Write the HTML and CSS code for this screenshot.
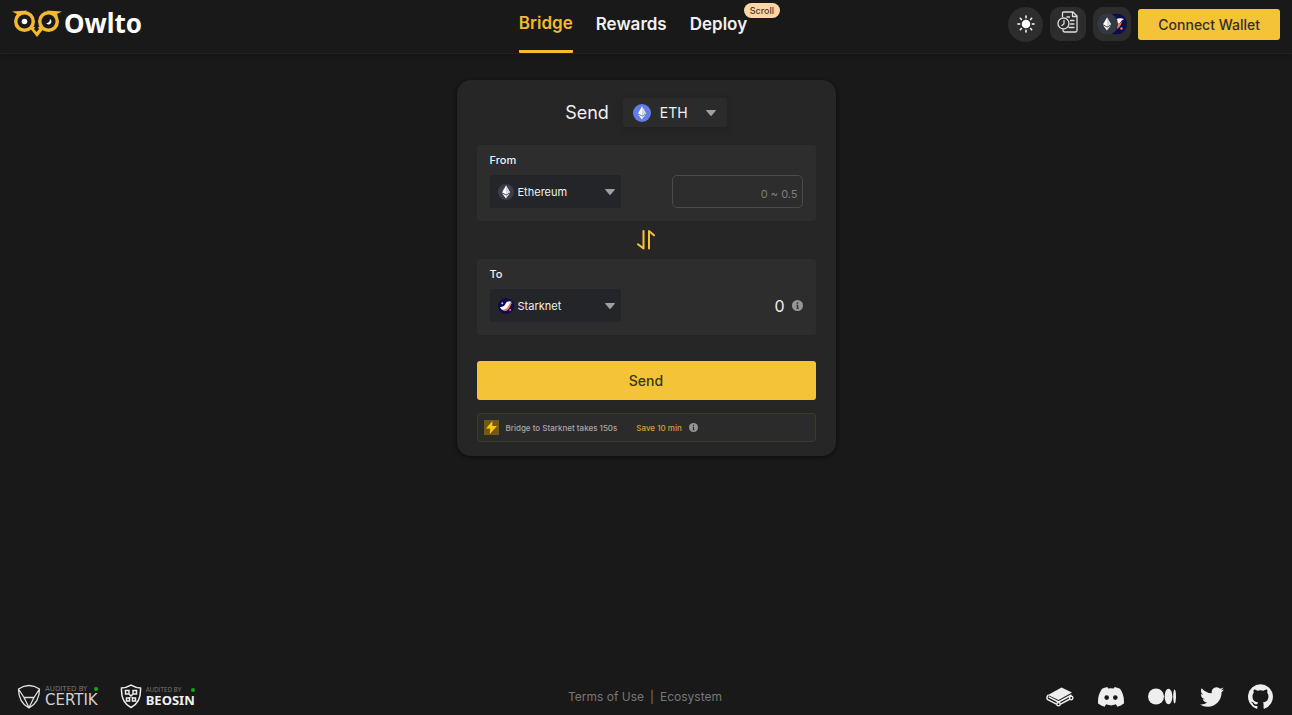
FILE: index.html
```html
<!DOCTYPE html>
<html lang="en">
<head>
<meta charset="utf-8">
<meta name="viewport" content="width=device-width, initial-scale=1">
<title>Owlto Bridge</title>
<link rel="stylesheet" href="styles.css">
</head>
<body>
<svg class="defs" aria-hidden="true">
  <symbol id="eth" viewBox="0 0 16 16">
    <path fill="#fff" d="M8 1.5 12 8.3 8 10.6 4 8.3z"/>
    <path fill="#d6d8e0" d="M8 1.5 12 8.3 8 10.6z"/>
    <path fill="#fff" d="M8 11.5 4 9.2 8 14.5z"/>
    <path fill="#d6d8e0" d="M8 11.5 12 9.2 8 14.5z"/>
  </symbol>
  <symbol id="stark" viewBox="0 0 16 16">
    <circle cx="8" cy="8" r="8" fill="#0c0c4f"/>
    <path fill="#ec796b" d="M14.200 5C13 6 12.700 7.500 12 9 10.800 11.700 8.500 13.500 5.500 12.800L3 11 8 10.500 11.500 4.500z"/>
    <path fill="#fff" d="M13.800 4C12 2.900 9 3 7.500 5.800 6.500 7.900 5 9 2 9.200 2.700 11.300 4.500 12 6.200 11.500 8.500 10.900 9.700 9.200 10.700 7.200 11.500 5.500 12.400 4.600 13.800 4z"/>
    <path fill="#fff" d="m4.200 3.700.4 1.100 1.100.4-1.100.4-.4 1.100-.4-1.100-1.100-.4 1.100-.4z"/>
    <circle cx="12.100" cy="12" r="1" fill="#ec796b"/>
  </symbol>
  <symbol id="caret" viewBox="0 0 10 6"><path fill="currentColor" d="M.6 0h8.800c.5 0 .7.500.4.800L5.500 5.700a.7.700 0 0 1-1 0L.2.800C-.1.500.1 0 .6 0z"/></symbol>
  <symbol id="info" viewBox="0 0 10 10"><circle cx="5" cy="5" r="5" fill="#969696"/><path fill="#2d2d2d" d="M4.300 2h1.400v1.400H4.300zM3.900 4.300h1.800v3h.6V8H3.900v-.7h.5V5h-.5z"/></symbol>
</svg>

<header class="header">
  <a class="logo" href="#">
    <svg width="50" height="28" viewBox="0 0 50 28" aria-hidden="true">
      <path fill="#f3ba2f" d="M0 2.500 15 1.500 11 6 4 7.500 5 5zM50 2.500 35 1.500l4 4.500 7 1.500L45 5zM17 18h16l-8 10z"/>
      <circle cx="12.500" cy="12.500" r="10.500" fill="#f3ba2f"/><circle cx="36.500" cy="12.500" r="10.500" fill="#f3ba2f"/>
      <path fill="#191919" d="m24.500 16-2.500 4 2.500 3 2.500-3z"/>
      <circle cx="12.500" cy="12.500" r="7" fill="#191919"/><circle cx="36.500" cy="12.500" r="7" fill="#191919"/>
      <circle cx="12.500" cy="12.500" r="2.800" fill="#fff"/>
      <path fill="#fff" d="M38 10a2.900 2.900 0 1 1-3.900 4.100c2.200.5 3.900-1.500 3.900-4.100z"/>
    </svg>
    <span>Owlto</span>
  </a>
  <nav class="nav">
    <a class="nav-link active" href="#">Bridge</a>
    <a class="nav-link" href="#">Rewards</a>
    <a class="nav-link" href="#">Deploy<span class="badge">Scroll</span></a>
  </nav>
  <div class="actions">
    <button class="icon-button round" aria-label="Light theme">
      <svg width="18" height="18" viewBox="0 0 18 18" fill="#fff" stroke="#fff" stroke-width="1.500" stroke-linecap="round"><circle cx="9" cy="9" r="3.500"/><path d="M9 .9v1.800M9 15.300v1.800M.9 9h1.800M15.300 9h1.800M3.300 3.300l1.200 1.200M13.500 13.500l1.200 1.200M3.300 14.700l1.200-1.200M13.500 4.500l1.200-1.200"/></svg>
    </button>
    <button class="icon-button" aria-label="History">
      <svg class="history" width="22" height="22" viewBox="0 0 22 22" fill="none" stroke="#dedede" stroke-width="1.300" stroke-linecap="round" stroke-linejoin="round"><path d="M5.500 5.500V2.200Q5.500 1 6.700 1H16l4 4v14.500q0 1.500-1.500 1.500H8q-2 0-2-2M15.500 1v4.500H20M10 6h2.500M13.500 9.500h3.500M13.500 13h3.500M12 16.500h5"/><circle cx="6.500" cy="12.500" r="5.500"/><path d="M7 9.500v3.300l-2 1.700"/></svg>
    </button>
    <button class="icon-button chains" aria-label="Networks">
      <svg width="30" height="22" viewBox="0 0 30 22"><circle cx="19.500" cy="11" r="10.500" fill="#0c0c4f"/><path fill="#fff" d="M19 6.500Q22 4.500 27 6q-3 1-4 4h-4z"/><path fill="#ec796b" d="M19 10h4.500l3-3.500q-1.500 1.500-2.300 4.500-1.200 3.500-4.200 5z"/><circle cx="24.500" cy="15.500" r="1.300" fill="#ec796b"/><circle cx="10.500" cy="11" r="10.500" fill="#343840"/><use href="#eth" x="2" y="3" width="16" height="16"/></svg>
    </button>
    <button class="connect">Connect Wallet</button>
  </div>
</header>

<main class="main">
  <form class="card">
    <div class="title-row">
      <label class="title" for="token">Send</label>
      <div class="picker token">
        <svg class="coin" viewBox="0 0 16 16" aria-hidden="true"><circle cx="8" cy="8" r="8" fill="#627eea"/><use href="#eth" x="1" y="1" width="14" height="14"/></svg>
        <select id="token"><option>ETH</option></select>
        <svg class="caret" aria-hidden="true"><use href="#caret"/></svg>
      </div>
    </div>
    <section class="panel">
      <label class="panel-label" for="from">From</label>
      <div class="panel-row">
        <div class="picker">
          <svg class="coin" viewBox="0 0 16 16" aria-hidden="true"><circle cx="8" cy="8" r="8" fill="#3a3d4d"/><use href="#eth" x="0" y="0" width="16" height="16"/></svg>
          <select id="from"><option>Ethereum</option></select>
          <svg class="caret" aria-hidden="true"><use href="#caret"/></svg>
        </div>
        <input class="amount" type="text" placeholder="0 ~ 0.5" aria-label="Amount">
      </div>
    </section>
    <button class="swap" type="button" aria-label="Swap direction">
      <svg width="18" height="20" viewBox="0 0 18 20" fill="none" stroke="#f5c338" stroke-width="2" stroke-linecap="round" stroke-linejoin="round"><path d="M6.500 1v17.500L1 14.200M12 18.500V1l5 4.300"/></svg>
    </button>
    <section class="panel">
      <label class="panel-label" for="to">To</label>
      <div class="panel-row">
        <div class="picker">
          <svg class="coin" aria-hidden="true"><use href="#stark"/></svg>
          <select id="to"><option>Starknet</option></select>
          <svg class="caret" aria-hidden="true"><use href="#caret"/></svg>
        </div>
        <div class="received"><output>0</output><svg class="info" aria-hidden="true"><use href="#info"/></svg></div>
      </div>
    </section>
    <button class="submit" type="button">Send</button>
    <div class="notice">
      <svg width="15" height="15" viewBox="0 0 15 15" aria-hidden="true"><path fill="#72591b" d="M0 0h15v15H0z"/><path fill="#ffc800" d="M8.500 1 2 8.500h4.200L5.800 14 13 6H8.300z"/></svg>
      <span class="notice-text">Bridge to Starknet takes 150s</span>
      <span class="notice-save">Save 10 min</span>
      <svg class="info small" aria-hidden="true"><use href="#info"/></svg>
    </div>
  </form>
</main>

<footer class="footer">
  <div class="audits">
    <a class="audit certik" href="#">
      <svg width="24" height="25" viewBox="0 0 24 25" fill="none" stroke="#e0e0e0" stroke-width="1.300" stroke-linejoin="round" aria-hidden="true"><path d="M1.500 5Q12-2 22.500 5c0 9-3 15-10.500 19C4.500 20 1.500 14 1.500 5zM1.500 5 7 13.500h10L22.500 5M7 13.500l5 10 5-10"/></svg>
      <span class="audit-text"><small>AUDITED BY <i class="dot"></i></small><span class="audit-name">CERTIK</span></span>
    </a>
    <a class="audit beosin" href="#">
      <svg width="22" height="25" viewBox="0 0 22 25" fill="none" stroke="#eee" stroke-width="1.500" aria-hidden="true"><path d="M11 1.200Q16 4 20.500 4c.5 9-2 16-9.500 19.500C3.500 20 1 13 1.500 4Q6 4 11 1.200z"/><path d="M5.500 6.500h3.500v3.500H5.500zM13 6.500h3.500v3.500H13zM6.500 14h3v3h-3zM12.500 14h3v3h-3zM8.500 9.500l5 5M13.500 9.500l-5 5"/></svg>
      <span class="audit-text"><small>AUDITED BY <i class="dot"></i></small><span class="audit-name">BEOSIN</span></span>
    </a>
  </div>
  <div class="legal"><a href="#">Terms of Use</a><span>|</span><a href="#">Ecosystem</a></div>
  <div class="social">
    <a href="#" aria-label="GitBook"><svg width="28" height="20" viewBox="0 0 28 20"><path fill="#eee" d="M2 8 15.500.500 26 5.500 12.500 13z"/><path fill="none" stroke="#eee" stroke-width="1.500" stroke-linejoin="round" d="M2.500 7.800Q.3 9.500 1.300 12.300l9.700 5M2.700 9.800l9.800 5.200 13-7M13.500 17.700 24 12"/><circle cx="12.500" cy="17.200" r="1.700" fill="#191919" stroke="#eee" stroke-width="1.400"/><circle cx="25.200" cy="11" r="1.700" fill="#191919" stroke="#eee" stroke-width="1.400"/></svg></a>
    <a href="#" aria-label="Discord"><svg width="26" height="20" viewBox="0 0 26 20"><path fill="#eee" d="M22 1.700A21 21 0 0 0 16.600 0l-.8 1.500a20 20 0 0 0-5.700 0L9.400 0A21 21 0 0 0 4 1.700C.6 6.700-.3 11.600.1 16.400A21 21 0 0 0 6.600 19.700l1.500-2.400c5 1.500 5 1.500 9.800 0l1.500 2.400a21 21 0 0 0 6.500-3.300c.5-5.600-.9-10.400-3.900-14.700z"/><circle cx="8.700" cy="10.600" r="2.300" fill="#191919"/><circle cx="17.300" cy="10.600" r="2.300" fill="#191919"/></svg></a>
    <a href="#" aria-label="Medium"><svg width="28" height="17" viewBox="0 0 28 17" fill="#eee"><circle cx="8" cy="8.500" r="8"/><ellipse cx="20.500" cy="8.500" rx="3.900" ry="7.700"/><ellipse cx="26.600" cy="8.500" rx="1.400" ry="6.900"/></svg></a>
    <a href="#" aria-label="Twitter"><svg width="24" height="20" viewBox="0 2 24 20"><path fill="#eee" d="M23.950 4.570a10 10 0 0 1-2.820.77 4.960 4.960 0 0 0 2.160-2.720 9.900 9.900 0 0 1-3.120 1.180 4.920 4.920 0 0 0-8.380 4.480C7.690 8.090 4.070 6.130 1.640 3.160a4.820 4.820 0 0 0-.67 2.480c0 1.710.87 3.210 2.190 4.100a4.900 4.900 0 0 1-2.230-.62v.06a4.920 4.920 0 0 0 3.950 4.830 5 5 0 0 1-2.210.08 4.940 4.940 0 0 0 4.600 3.420A9.870 9.870 0 0 1 0 19.540a13.990 13.990 0 0 0 7.550 2.210c9.050 0 14-7.500 14-13.980l-.02-.64a9.900 9.900 0 0 0 2.420-2.560z"/></svg></a>
    <a href="#" aria-label="GitHub"><svg width="25" height="25" viewBox="0 0 24 24"><path fill="#eee" d="M12 .3a12 12 0 0 0-3.800 23.380c.6.120.83-.26.83-.57L9 21.070c-3.340.72-4.040-1.610-4.040-1.610-.55-1.390-1.340-1.760-1.340-1.760-1.080-.74.090-.73.090-.73 1.200.09 1.840 1.240 1.840 1.240 1.070 1.830 2.810 1.300 3.500 1 .1-.78.410-1.310.76-1.610-2.670-.3-5.470-1.330-5.470-5.930 0-1.310.47-2.380 1.240-3.220-.14-.3-.54-1.520.1-3.180 0 0 1-.32 3.300 1.230a11.500 11.500 0 0 1 6 0c2.280-1.550 3.290-1.230 3.290-1.230.64 1.660.24 2.880.12 3.180a4.650 4.650 0 0 1 1.230 3.220c0 4.610-2.800 5.630-5.480 5.920.42.360.81 1.100.81 2.220l-.01 3.290c0 .31.200.69.820.57A12 12 0 0 0 12 .3z"/></svg></a>
  </div>
</footer>
</body>
</html>
```

FILE: styles.css
```css
* { box-sizing: border-box; }

body {
  margin: 0;
  min-height: 100vh;
  display: flex;
  flex-direction: column;
  background: #191919;
  color: #f0f0f0;
  font-family: Inter, "Liberation Sans", sans-serif;
}

a { color: inherit; text-decoration: none; }
svg { display: block; flex: none; }
button, input, select { font: inherit; color: inherit; }
button { border: 0; padding: 0; cursor: pointer; }
.defs { position: absolute; width: 0; height: 0; }

.header {
  display: grid;
  grid-template-columns: 1fr auto 1fr;
  height: 54px;
  padding: 0 12px;
  border-bottom: 1px solid #202020;
  box-shadow: 0 2px 4px #151515;
}

.logo {
  display: flex;
  align-items: flex-start;
  gap: 2px;
  padding-top: 9px;
  color: #fff;
  font: 700 26px/28px "Noto Sans", sans-serif;
}

.nav {
  display: flex;
  gap: 23px;
  margin-right: 26px;
  font-size: 17px;
  font-weight: 600;
}

.nav-link {
  position: relative;
  height: 53px;
  line-height: 48px;
  border-bottom: 3px solid transparent;
}

.nav-link.active { color: #f3ba2f; border-color: #f3ba2f; border-radius: 1px; line-height: 46px; }

.badge {
  position: absolute;
  left: 54px;
  top: 3px;
  padding: 0 6px;
  border-radius: 8px;
  background: #ffd5a6;
  color: #4a3c2c;
  font-size: 9px;
  font-weight: 500;
  line-height: 15px;
}

.actions {
  display: flex;
  align-items: center;
  justify-content: flex-end;
  gap: 7px;
  height: 48px;
}

.icon-button {
  display: grid;
  place-items: center;
  width: 36px;
  height: 34px;
  border-radius: 10px;
  background: #2d2d2d;
}

.round { width: 35px; height: 35px; border-radius: 50%; }
.history { margin-bottom: 4px; }
.chains { width: 38px; }

.connect {
  height: 31px;
  padding: 0 20px;
  border-radius: 3px;
  background: #f5c338;
  color: #333127;
  font-size: 14px;
  font-weight: 500;
}

.main { flex: 1; padding: 26px 16px; }

.card {
  display: flex;
  flex-direction: column;
  max-width: 379px;
  margin: 0 auto;
  padding: 18px 20px 14px;
  border-radius: 14px;
  background: #262626;
  box-shadow: 0 1px 4px #0c0c0c;
}

.title-row {
  display: flex;
  align-items: center;
  justify-content: center;
  gap: 14px;
  margin-bottom: 18px;
}

.title { font-size: 18px; line-height: 29px; }

.picker {
  display: flex;
  position: relative;
  width: 131px;
  height: 33px;
  border-radius: 3px;
  background: #242529;
  font-size: 11px;
}

.picker select {
  width: 100%;
  padding: 0 28px;
  border: 0;
  border-radius: inherit;
  appearance: none;
  background: transparent;
}

.picker .coin, .picker .caret { position: absolute; top: 0; bottom: 0; margin: auto 0; pointer-events: none; }
.picker .coin { left: 8px; width: 16px; height: 16px; }
.picker .caret { right: 6px; width: 10px; height: 6px; color: #a0a0a0; }

.token {
  width: 104px;
  height: 29px;
  background: #2b2b2b;
  box-shadow: 0 2px 6px #222;
  font-size: 14px;
}

.token select { padding: 0 24px 0 37px; }
.token .coin { left: 10px; width: 18px; height: 18px; }
.token .caret { right: 11px; }

.panel {
  padding: 9px 13px 13px;
  border-radius: 3px;
  background: #2d2d2d;
}

.panel-label { display: block; margin-bottom: 8px; font-size: 11px; font-weight: 500; line-height: 13px; }
.panel-row { display: flex; align-items: center; justify-content: space-between; }

.amount {
  width: 131px;
  height: 33px;
  padding: 4px 4px 0;
  border: 1px solid #4b4b4b;
  border-radius: 5px;
  background: transparent;
  font-size: 11px;
  text-align: right;
}

.amount::placeholder { color: #7e7e7e; }

.swap { align-self: center; padding: 9px; background: none; }

.received { display: flex; align-items: center; gap: 7px; font-size: 16px; }
.info { width: 11px; height: 11px; }
.info.small { width: 9px; height: 9px; }

.submit {
  height: 39px;
  margin: 26px 0 13px;
  border-radius: 3px;
  background: #f5c338;
  color: #3a3423;
  font-size: 14px;
  font-weight: 500;
}

.notice {
  display: flex;
  align-items: center;
  height: 29px;
  padding: 0 6px;
  border: 1px solid #3e3a2a;
  border-radius: 3px;
  background: #2b2b2b;
  font-size: 8px;
  font-weight: 500;
}

.notice-text { margin: 0 19px 0 7px; color: #a8a8a8; }
.notice-save { margin-right: 7px; color: #d2a32f; }

.footer {
  display: grid;
  grid-template-columns: 1fr auto 1fr;
  align-items: center;
  padding: 0 19px 6px 17px;
}

.audits, .audit, .legal, .social { display: flex; align-items: center; }
.audits { gap: 22px; }
.audit { gap: 4px; }
.audit-text { display: flex; flex-direction: column; }
.audit small { display: flex; align-items: center; justify-content: space-between; color: #777; font-size: 7px; line-height: 8px; }
.certik .audit-name { color: #d0d0d0; font: 400 15px/15px "DejaVu Sans", sans-serif; }
.certik small { font-family: "DejaVu Sans", sans-serif; }
.beosin .audit-name { color: #f0f0f0; font: 700 13px/13px "Noto Sans", sans-serif; }
.beosin small { font-size: 6px; }
.dot { width: 4px; height: 4px; border-radius: 50%; background: #12a912; }

.legal { gap: 6px; color: #777; font-size: 12px; line-height: 18px; }
.social { justify-content: flex-end; gap: 24px; }
```
